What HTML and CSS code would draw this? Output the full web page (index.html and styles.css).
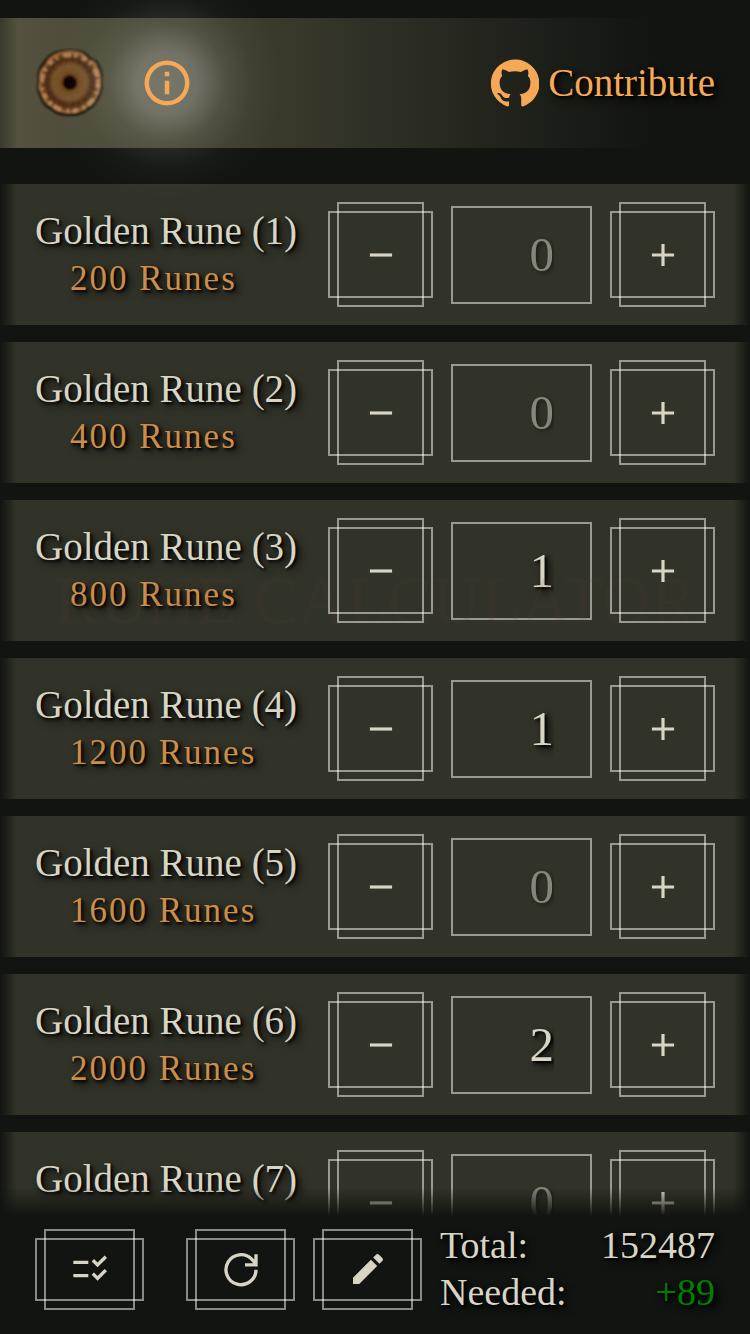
FILE: index.html
```
<!DOCTYPE html>
<html lang="en">
<head>
<meta charset="utf-8">
<meta name="viewport" content="width=device-width, initial-scale=1">
<title>Rune Calculator</title>
<link rel="stylesheet" href="styles.css">
</head>
<body>
<svg class="sprite" aria-hidden="true">
  <symbol id="minus" viewBox="0 0 24 24"><path d="M5 11h14v2H5z"/></symbol>
  <symbol id="plus" viewBox="0 0 24 24"><path d="M19 13h-6v6h-2v-6H5v-2h6V5h2v6h6z"/></symbol>
</svg>
<header class="header">
  <svg class="rune" viewBox="0 0 70 70" aria-hidden="true">
    <defs>
      <radialGradient id="wood">
        <stop offset="0" stop-color="#080503"/><stop offset=".17" stop-color="#100704"/>
        <stop offset=".24" stop-color="#6a3812"/><stop offset=".34" stop-color="#6b4c26"/>
        <stop offset=".56" stop-color="#765129"/><stop offset=".74" stop-color="#4b2b15"/>
        <stop offset=".88" stop-color="#68401f"/><stop offset="1" stop-color="#a9723f"/>
      </radialGradient>
      <filter id="soft"><feGaussianBlur stdDeviation=".9"/></filter>
    </defs>
    <g filter="url(#soft)">
      <path d="M22 3Q35 0 48 3Q53 6 56 10Q63 11 65 18Q69 24 67 33Q69 42 65 49Q61 58 54 62Q45 69 35 68Q23 69 16 62Q7 58 5 49Q0 41 3 32Q1 22 8 14Q13 6 22 3Z" fill="#1a170f"/>
      <path d="M23 5Q35 1 47 5Q51 8 54 12Q60 12 62 19Q66 25 65 34Q66 42 62 48Q59 56 52 59Q45 65 35 65Q23 65 17 59Q9 55 7 47Q2 40 5 32Q3 23 10 17Q14 8 23 5Z" fill="url(#wood)"/>
      <circle cx="35" cy="35" r="23" fill="none" stroke="#2f1b0d" stroke-width="8" stroke-dasharray="1 3 2 5 1 2" opacity=".4"/>
      <circle cx="35" cy="35" r="14" fill="none" stroke="#a47840" stroke-width="9" stroke-dasharray="1 2 1 3" opacity=".25"/>
      <circle cx="35" cy="35" r="28" fill="none" stroke="#e0aa76" stroke-width="4" stroke-dasharray="5 4 2 6 8 3 3 5" opacity=".6"/>
      <circle cx="35" cy="35" r="7" fill="#080403"/>
    </g>
  </svg>
  <button class="info" type="button" aria-label="Information">
    <svg viewBox="0 0 24 24"><path d="M11 7h2v2h-2zm0 4h2v6h-2zM12 2a10 10 0 1 0 0 20 10 10 0 0 0 0-20zm0 18a8 8 0 1 1 0-16 8 8 0 0 1 0 16z"/></svg>
  </button>
  <a class="contribute" href="#">
    <svg viewBox="1 1 22 22" aria-hidden="true"><path d="M12 1.27a11 11 0 00-3.48 21.46c.55.09.73-.28.73-.55v-1.84c-3.03.64-3.67-1.46-3.67-1.46-.55-1.29-1.28-1.65-1.28-1.65-.92-.65.1-.65.1-.65 1.1 0 1.73 1.1 1.73 1.1.92 1.65 2.57 1.2 3.21.92a2 2 0 01.64-1.47c-2.47-.27-5.04-1.19-5.04-5.5 0-1.1.46-2.1 1.2-2.84a3.76 3.76 0 010-2.93s.91-.28 3.11 1.1c1.8-.49 3.7-.49 5.5 0 2.1-1.38 3.02-1.1 3.02-1.1a3.76 3.76 0 01.1 2.93c.83.74 1.2 1.74 1.2 2.94 0 4.21-2.57 5.13-5.04 5.4.45.37.82.92.82 2.02v3.03c0 .27.1.64.73.55A11 11 0 0012 1.27"/></svg>
    <span>Contribute</span>
  </a>
</header>
<main class="rows">
  <h1 class="title">RUNE CALCULATOR</h1>
  <section class="row">
    <label class="label" for="r1"><span class="name">Golden Rune (1)</span><span class="worth">200 Runes</span></label>
    <button class="step framed" type="button" aria-label="Remove one"><svg><use href="#minus"/></svg></button>
    <input class="count" id="r1" type="text" inputmode="numeric" placeholder="0">
    <button class="step framed" type="button" aria-label="Add one"><svg><use href="#plus"/></svg></button>
  </section>
  <section class="row">
    <label class="label" for="r2"><span class="name">Golden Rune (2)</span><span class="worth">400 Runes</span></label>
    <button class="step framed" type="button" aria-label="Remove one"><svg><use href="#minus"/></svg></button>
    <input class="count" id="r2" type="text" inputmode="numeric" placeholder="0">
    <button class="step framed" type="button" aria-label="Add one"><svg><use href="#plus"/></svg></button>
  </section>
  <section class="row">
    <label class="label" for="r3"><span class="name">Golden Rune (3)</span><span class="worth">800 Runes</span></label>
    <button class="step framed" type="button" aria-label="Remove one"><svg><use href="#minus"/></svg></button>
    <input class="count" id="r3" type="text" inputmode="numeric" placeholder="0" value="1">
    <button class="step framed" type="button" aria-label="Add one"><svg><use href="#plus"/></svg></button>
  </section>
  <section class="row">
    <label class="label" for="r4"><span class="name">Golden Rune (4)</span><span class="worth">1200 Runes</span></label>
    <button class="step framed" type="button" aria-label="Remove one"><svg><use href="#minus"/></svg></button>
    <input class="count" id="r4" type="text" inputmode="numeric" placeholder="0" value="1">
    <button class="step framed" type="button" aria-label="Add one"><svg><use href="#plus"/></svg></button>
  </section>
  <section class="row">
    <label class="label" for="r5"><span class="name">Golden Rune (5)</span><span class="worth">1600 Runes</span></label>
    <button class="step framed" type="button" aria-label="Remove one"><svg><use href="#minus"/></svg></button>
    <input class="count" id="r5" type="text" inputmode="numeric" placeholder="0">
    <button class="step framed" type="button" aria-label="Add one"><svg><use href="#plus"/></svg></button>
  </section>
  <section class="row">
    <label class="label" for="r6"><span class="name">Golden Rune (6)</span><span class="worth">2000 Runes</span></label>
    <button class="step framed" type="button" aria-label="Remove one"><svg><use href="#minus"/></svg></button>
    <input class="count" id="r6" type="text" inputmode="numeric" placeholder="0" value="2">
    <button class="step framed" type="button" aria-label="Add one"><svg><use href="#plus"/></svg></button>
  </section>
  <section class="row">
    <label class="label" for="r7"><span class="name">Golden Rune (7)</span></label>
    <button class="step framed" type="button" aria-label="Remove one"><svg><use href="#minus"/></svg></button>
    <input class="count" id="r7" type="text" inputmode="numeric" placeholder="0">
    <button class="step framed" type="button" aria-label="Add one"><svg><use href="#plus"/></svg></button>
  </section>
</main>
<footer class="footer">
  <button class="tool select framed" type="button" aria-label="Select runes"><svg viewBox="0 0 24 24"><path d="M16.540 11 13 7.460l1.410-1.410 2.120 2.120 4.240-4.240 1.410 1.410zM11 7H2v2h9zM16.540 19 13 15.460l1.410-1.410 2.120 2.120 4.240-4.240 1.410 1.410zM11 15H2v2h9z"/></svg></button>
  <button class="tool framed" type="button" aria-label="Reset"><svg viewBox="0 0 24 24"><path d="M21 12.500a9 9 0 1 1-2.600-6.400L20.600 8.500M21 3.100V9.500h-6.600" fill="none" stroke="currentColor" stroke-width="2"/></svg></button>
  <button class="tool framed" type="button" aria-label="Edit"><svg viewBox="0 0 24 24"><path d="M3 17.250V21h3.750L17.500 10.250l-3.750-3.750zM20.600 7.200a1.300 1.300 0 0 0 0-1.800l-2-2a1.300 1.300 0 0 0-1.800 0l-1.700 1.700 3.750 3.750z"/></svg></button>
  <dl class="totals">
    <div class="line"><dt>Total:</dt><dd>152487</dd></div>
    <div class="line"><dt>Needed:</dt><dd class="surplus">+89</dd></div>
  </dl>
</footer>
</body>
</html>
```
FILE: styles.css
```
* { box-sizing: border-box; }

body {
  display: flex;
  flex-direction: column;
  height: 100vh;
  margin: 0;
  overflow: hidden;
  background: #111411;
  color: #d8d5c4;
  font-family: "Liberation Serif", "Times New Roman", serif;
  font-size: 38px;
  line-height: 48px;
  text-shadow: 2px 2px 3px #000, 4px 4px 8px #000;
}

svg { display: block; fill: currentColor; }
.sprite { display: none; }

button {
  padding: 0;
  border: 0;
  background: none;
  color: inherit;
}

.header {
  display: flex;
  align-items: center;
  flex: none;
  height: 130px;
  margin: 18px 0 36px;
  padding: 0 35px;
  background:
    linear-gradient(90deg, rgba(17, 20, 17, .4), transparent 18px),
    linear-gradient(90deg, #56533f 0, #2f3025 50%, #111411 87%);
}
.rune { width: 70px; height: 70px; }
.info {
  position: relative;
  margin-left: 35px;
  color: #f5a855;
}
.info svg { position: relative; width: 54px; height: 54px; }
/* halo behind the icon, spilling over the header edges */
.info::before {
  content: "";
  position: absolute;
  inset: -90px;
  background: radial-gradient(closest-side, rgba(198, 202, 195, .38) 0, rgba(198, 202, 195, .35) 26%, rgba(198, 202, 195, .13) 50%, rgba(198, 202, 195, .03) 74%, transparent);
  pointer-events: none;
}
.contribute {
  display: flex;
  align-items: center;
  gap: 9px;
  margin-left: auto;
  color: #f5a855;
  font-size: 39px;
  line-height: 44px;
  text-decoration: none;
}
.contribute svg { width: 48px; height: 48px; }

.rows {
  display: flex;
  flex-direction: column;
  flex: 1;
  gap: 17px;
  min-height: 0;
  overflow: hidden;
}
.row {
  display: flex;
  align-items: center;
  flex: none;
  gap: 18px;
  height: 141px;
  padding: 0 35px;
  background:
    linear-gradient(90deg, #111411, transparent 17px),
    linear-gradient(270deg, #111411, transparent 17px),
    #323328;
}
.label { flex: 1; min-height: 96px; white-space: nowrap; }
.name, .worth { display: block; }
.name { font-size: 39px; }
.worth {
  padding-left: 35px;
  color: #cc8d4b;
  font-size: 35px;
  letter-spacing: 2px;
}

/* two crossed rectangles */
.framed {
  position: relative;
  display: grid;
  place-items: center;
  flex: none;
}
.framed::before, .framed::after {
  content: "";
  position: absolute;
  border: 2px solid rgba(255, 255, 255, .5);
}
.framed::before { inset: 0 9px; }
.framed::after { inset: 9px 0; }

.step { width: 105px; height: 105px; }
.step svg { width: 38px; height: 38px; }

.count {
  flex: none;
  width: 141px;
  height: 98px;
  padding: 0 36px 0 0;
  border: 2px solid rgba(255, 255, 255, .5);
  background: none;
  color: inherit;
  font: inherit;
  font-size: 49px;
  text-align: right;
  text-shadow: inherit;
}
.count::placeholder {
  color: #87867a;
  opacity: 1;
  text-shadow: 2px 2px 4px rgba(0, 0, 0, .5);
}

.title {
  position: fixed;
  inset: 564px 0 auto;
  margin: 0;
  color: rgba(90, 62, 60, .12);
  font-size: 67px;
  font-weight: 400;
  line-height: 72px;
  text-align: center;
  text-shadow: none;
  white-space: nowrap;
  pointer-events: none;
}

.footer {
  position: relative;
  display: flex;
  align-items: center;
  flex: none;
  gap: 18px;
  padding: 6px 35px 18px;
  background: #111411;
}
.footer::before {
  content: "";
  position: absolute;
  inset: -28px 0 100%;
  background: linear-gradient(transparent, #111411);
  pointer-events: none;
}
.tool { width: 109px; height: 81px; }
.tool svg { width: 40px; height: 40px; }
.select { margin-right: 24px; }
.totals { flex: 1; margin: 0; line-height: 47px; }
.line { display: flex; justify-content: space-between; }
.line dd { margin: 0; }
.surplus { color: #008000; }
```
